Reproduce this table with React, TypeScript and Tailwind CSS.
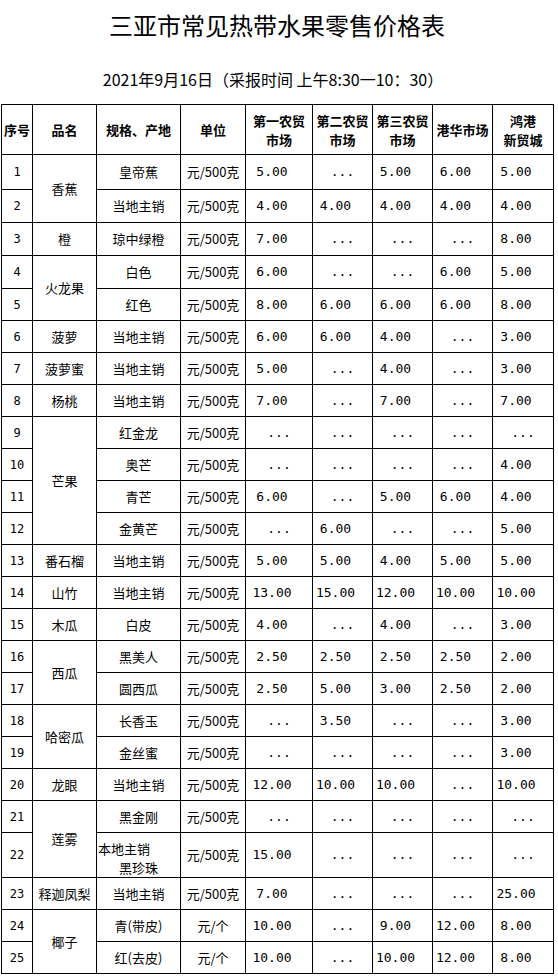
import React from "react";

const D = "...";
const U = "元/500克";

type Row = {
  no: number;
  name?: string;
  span?: number;
  spec: React.ReactNode;
  unit?: string;
  prices: string[];
  h?: string;
};

const rows: Row[] = [
  { no: 1, name: "香蕉", span: 2, spec: "皇帝蕉", prices: ["5.00", D, "5.00", "6.00", "5.00"], h: "h-[35px]" },
  { no: 2, spec: "当地主销", prices: ["4.00", "4.00", "4.00", "4.00", "4.00"], h: "h-[33px]" },
  { no: 3, name: "橙", spec: "琼中绿橙", prices: ["7.00", D, D, D, "8.00"], h: "h-[33px]" },
  { no: 4, name: "火龙果", span: 2, spec: "白色", prices: ["6.00", D, D, "6.00", "5.00"], h: "h-[33px]" },
  { no: 5, spec: "红色", prices: ["8.00", "6.00", "6.00", "6.00", "8.00"] },
  { no: 6, name: "菠萝", spec: "当地主销", prices: ["6.00", "6.00", "4.00", D, "3.00"] },
  { no: 7, name: "菠萝蜜", spec: "当地主销", prices: ["5.00", D, "4.00", D, "3.00"] },
  { no: 8, name: "杨桃", spec: "当地主销", prices: ["7.00", D, "7.00", D, "7.00"] },
  { no: 9, name: "芒果", span: 4, spec: "红金龙", prices: [D, D, D, D, D] },
  { no: 10, spec: "奥芒", prices: [D, D, D, D, "4.00"] },
  { no: 11, spec: "青芒", prices: ["6.00", D, "5.00", "6.00", "4.00"] },
  { no: 12, spec: "金黄芒", prices: [D, "6.00", D, D, "5.00"] },
  { no: 13, name: "番石榴", spec: "当地主销", prices: ["5.00", "5.00", "4.00", "5.00", "5.00"] },
  { no: 14, name: "山竹", spec: "当地主销", prices: ["13.00", "15.00", "12.00", "10.00", "10.00"] },
  { no: 15, name: "木瓜", spec: "白皮", prices: ["4.00", D, "4.00", D, "3.00"] },
  { no: 16, name: "西瓜", span: 2, spec: "黑美人", prices: ["2.50", "2.50", "2.50", "2.50", "2.00"] },
  { no: 17, spec: "圆西瓜", prices: ["2.50", "5.00", "3.00", "2.50", "2.00"] },
  { no: 18, name: "哈密瓜", span: 2, spec: "长香玉", prices: [D, "3.50", D, D, "3.00"] },
  { no: 19, spec: "金丝蜜", prices: [D, D, D, D, "3.00"] },
  { no: 20, name: "龙眼", spec: "当地主销", prices: ["12.00", "10.00", "10.00", D, "10.00"] },
  { no: 21, name: "莲雾", span: 2, spec: "黑金刚", prices: [D, D, D, D, D] },
  {
    no: 22,
    spec: (
      <div className="leading-[19px] pt-[6px]">
        <div className="text-left pl-[1px]">本地主销</div>
        <div>黑珍珠</div>
      </div>
    ),
    prices: ["15.00", D, D, D, D],
    h: "h-[40px]",
  },
  { no: 23, name: "释迦凤梨", spec: "当地主销", prices: ["7.00", D, D, D, "25.00"] },
  { no: 24, name: "椰子", span: 2, spec: "青(带皮)", unit: "元/个", prices: ["10.00", D, "9.00", "12.00", "8.00"] },
  { no: 25, spec: "红(去皮)", unit: "元/个", prices: ["10.00", D, "10.00", "12.00", "8.00"] },
];

const cell = "border border-black p-0 text-center align-middle";
const head = "border border-black p-0 text-center align-middle font-bold text-[13px] leading-[19px]";

const App = () => {
  return (
    <div className="min-h-[977px] bg-white text-black font-['Noto_Sans_CJK_SC',sans-serif]">
      <div className="ml-[1px] w-[552px]">
        <div className="h-[50px] flex items-center justify-center text-[24px]">
          三亚市常见热带水果零售价格表
        </div>
        <div className="h-[54px] pt-[4px] pr-[8px] flex items-center justify-center text-[16px]">
          2021年9月16日（采报时间 上午8:30一10：30）
        </div>
        <table className="w-[552px] table-fixed border-collapse">
          <colgroup>
            <col className="w-[31px]" />
            <col className="w-[64px]" />
            <col className="w-[84px]" />
            <col className="w-[65px]" />
            <col className="w-[67px]" />
            <col className="w-[60px]" />
            <col className="w-[60px]" />
            <col className="w-[60px]" />
            <col className="w-[61px]" />
          </colgroup>
          <thead>
            <tr className="h-[50px]">
              <th className={head}>序号</th>
              <th className={head}>品名</th>
              <th className={head}>规格、产地</th>
              <th className={head}>单位</th>
              <th className={head}>
                第一农贸
                <br />
                市场
              </th>
              <th className={head}>
                第二农贸
                <br />
                市场
              </th>
              <th className={head}>
                第三农贸
                <br />
                市场
              </th>
              <th className={head}>港华市场</th>
              <th className={head}>
                鸿港
                <br />
                新贸城
              </th>
            </tr>
          </thead>
          <tbody className="text-[13px]">
            {rows.map((r) => (
              <tr key={r.no} className={r.h ?? "h-[32px]"}>
                <td className={cell + " font-['DejaVu_Sans_Mono',monospace] text-[12px]"}>{r.no}</td>
                {r.name && (
                  <td className={cell} rowSpan={r.span ?? 1}>
                    {r.name}
                  </td>
                )}
                <td className={cell}>{r.spec}</td>
                <td className={cell}>{r.unit ?? U}</td>
                {r.prices.map((p, i) => (
                  <td
                    key={i}
                    className={
                      cell +
                      " font-['DejaVu_Sans_Mono',monospace] text-[13px] " +
                      (p === D ? "" : "pr-[14px]")
                    }
                  >
                    {p}
                  </td>
                ))}
              </tr>
            ))}
          </tbody>
        </table>
      </div>
    </div>
  );
};

export default App;
